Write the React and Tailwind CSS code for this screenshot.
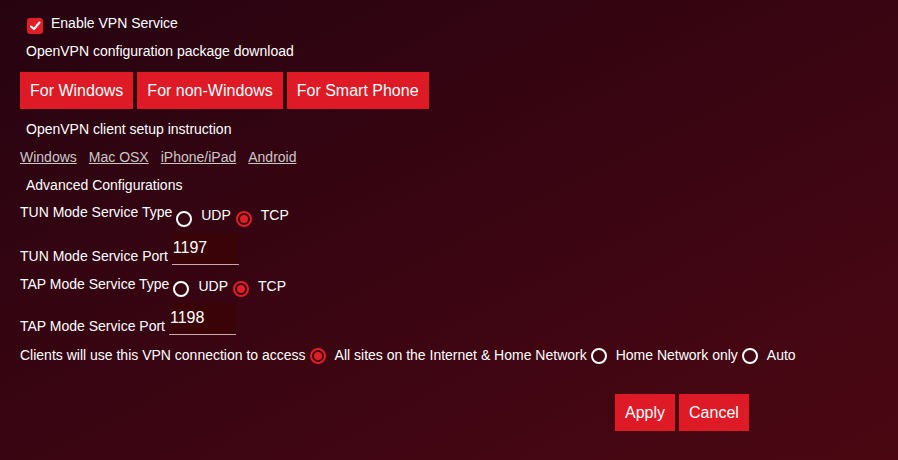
import React from 'react';

const Radio = ({ checked, className = '' }) => (
  checked ? (
    <span className={`flex h-4 w-4 shrink-0 items-center justify-center rounded-full border-2 border-[#e01e28] ${className}`}>
      <span className="h-2 w-2 rounded-full bg-[#e01e28]" />
    </span>
  ) : (
    <span className={`block h-4 w-4 shrink-0 rounded-full border-2 border-white ${className}`} />
  )
);

const PortRow = ({ label, value, inputClass }) => (
  <div className="mt-[6px] flex items-end pl-5">
    <span className="leading-[18px]">{label}</span>
    <input
      readOnly
      value={value}
      className={`box-border h-8 w-[67px] border-b border-[#c9a9ab] bg-[#3a0307] pb-[2px] pl-px text-base text-white outline-none ${inputClass}`}
    />
  </div>
);

export default function App() {
  const links = ['Windows', 'Mac OSX', 'iPhone/iPad', 'Android'];
  const downloads = ['For Windows', 'For non-Windows', 'For Smart Phone'];

  return (
    <div
      className="h-[460px] w-[898px] overflow-hidden bg-gradient-to-br from-[#270310] via-[#3a0512] to-[#4a0712] text-[14px] text-white"
      style={{ fontFamily: '"Liberation Sans", Arial, sans-serif' }}
    >
      {/* Enable VPN */}
      <div className="flex items-start pl-[27px] pt-[12px]">
        <span className="mt-[6px] flex h-4 w-4 items-center justify-center rounded-[3px] bg-[#e01e28]">
          <svg width="12" height="12" viewBox="0 0 12 12" fill="none">
            <polyline points="2,6.5 5,9 10.5,2.5" stroke="white" strokeWidth="2" strokeLinecap="round" strokeLinejoin="round" />
          </svg>
        </span>
        <span className="ml-2 mt-px leading-5">Enable VPN Service</span>
      </div>

      <div className="mt-[7px] pl-[26px] leading-5">OpenVPN configuration package download</div>

      <div className="mt-[11px] flex gap-1 pl-5">
        {downloads.map(d => (
          <button key={d} className="h-[37px] bg-[#dd1a25] px-[10px] text-base text-white">{d}</button>
        ))}
      </div>

      <div className="mt-[10px] pl-[26px] leading-5">OpenVPN client setup instruction</div>

      <div className="mt-2 flex gap-3 pl-5 leading-5">
        {links.map(l => (
          <a key={l} href="#" className="text-[#cdc6c7] underline">{l}</a>
        ))}
      </div>

      <div className="mt-2 pl-[26px] leading-5">Advanced Configurations</div>

      {/* TUN type */}
      <div className="mt-[7px] flex items-start pl-5 leading-5">
        <span>TUN Mode Service Type</span>
        <Radio className="ml-1 mt-[9px]" />
        <span className="ml-[9px] mt-[3px]">UDP</span>
        <Radio checked className="ml-[5px] mt-[9px]" />
        <span className="ml-[9px] mt-[3px]">TCP</span>
      </div>

      <PortRow label="TUN Mode Service Port" value="1197" inputClass="ml-1" />

      {/* TAP type */}
      <div className="mt-[9px] flex items-start pl-5 leading-5">
        <span>TAP Mode Service Type</span>
        <Radio className="ml-1 mt-[7px]" />
        <span className="ml-[9px] mt-[2px]">UDP</span>
        <Radio checked className="ml-[5px] mt-[7px]" />
        <span className="ml-[9px] mt-[2px]">TCP</span>
      </div>

      <PortRow label="TAP Mode Service Port" value="1198" inputClass="ml-1" />

      {/* Client access */}
      <div className="mt-[10px] flex items-start pl-5 leading-5">
        <span>Clients will use this VPN connection to access</span>
        <Radio checked className="ml-1 mt-[3px]" />
        <span className="ml-[9px]">All sites on the Internet &amp; Home Network</span>
        <Radio className="ml-1 mt-[3px]" />
        <span className="ml-[9px]">Home Network only</span>
        <Radio className="ml-1 mt-[3px]" />
        <span className="ml-[9px]">Auto</span>
      </div>

      <div className="mt-[29px] flex gap-1 pl-[615px]">
        <button className="h-[37px] bg-[#dd1a25] px-[10px] text-base text-white">Apply</button>
        <button className="h-[37px] bg-[#dd1a25] px-[10px] text-base text-white">Cancel</button>
      </div>
    </div>
  );
}
